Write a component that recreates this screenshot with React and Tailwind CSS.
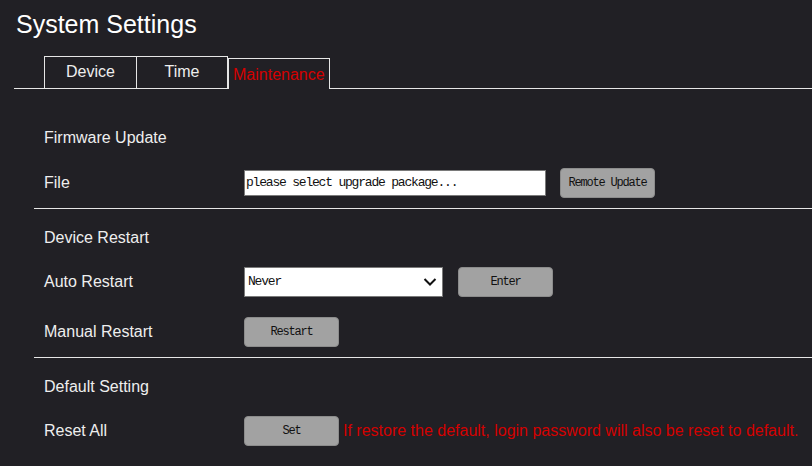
const mono = { fontFamily: '"Liberation Mono", "DejaVu Sans Mono", monospace' };

const Btn = ({ children, className = "" }) => (
  <button
    className={`h-[30px] w-[95px] rounded-[4px] border border-[#8c8c8c] bg-[#a2a2a2] text-[12px] tracking-[-1.2px] text-[#111] font-['Liberation_Mono',monospace] ${className}`}
  >
    {children}
  </button>
);

const Row = ({ label, className = "", children }) => (
  <div className={`flex h-[30px] items-center ${className}`}>
    <div className="w-[210px] pl-[10px] text-[16px] text-[#eeeeee]">{label}</div>
    <div className="flex items-center">{children}</div>
  </div>
);

const Header = ({ children }) => (
  <div className="flex h-[30px] items-center pl-[10px] text-[16px] text-[#eeeeee]">{children}</div>
);

export default function App() {
  return (
    <div className="h-[466px] w-[812px] overflow-hidden bg-[#212025] font-['Liberation_Sans',Arial,sans-serif] text-white">
      <div className="pl-[16px] pt-[8px] text-[25px] leading-[32px] text-white">System Settings</div>

      <div className="ml-[14px] mt-[16px] flex items-end border-b border-[#e6e6e6] pl-[30px]">
        <div className="flex h-[32px] w-[92px] items-center justify-center border-l border-t border-[#e6e6e6] pb-[2px] text-[16px] text-[#eeeeee]">
          Device
        </div>
        <div className="flex h-[32px] w-[92px] items-center justify-center border-l border-r border-t border-[#e6e6e6] pb-[2px] text-[16px] text-[#eeeeee]">
          Time
        </div>
        <div className="-mb-px flex h-[31px] w-[102px] items-center border-x border-t border-[#e6e6e6] bg-[#212025] pl-[4px] pt-[1px] text-[16px] text-[#d40000]">
          Maintenance
        </div>
      </div>

      <div className="ml-[34px]">
        <div className="border-b border-[#e6e6e6] pb-[10px] pt-[34px]">
          <Header>Firmware Update</Header>
          <Row label="File" className="mt-[15px]">
            <div
              className="flex h-[26px] w-[302px] items-center border border-[#7a7a7a] bg-white pl-[1px] text-[13px] tracking-[-1.2px] text-[#111]"
              style={mono}
            >
              please select upgrade package...
            </div>
            <Btn className="ml-[14px]">Remote Update</Btn>
          </Row>
        </div>

        <div className="border-b border-[#e6e6e6] pb-[10px] pt-[14px]">
          <Header>Device Restart</Header>
          <Row label="Auto Restart" className="mt-[14px]">
            <div className="flex h-[30px] w-[199px] items-center justify-between border border-[#7a7a7a] bg-white pl-[3px] pr-[5px]">
              <span className="text-[13px] tracking-[-1.2px] text-[#111]" style={mono}>
                Never
              </span>
              <svg width="14" height="10" viewBox="0 0 14 10">
                <polyline points="1.5,2 7,7.5 12.5,2" fill="none" stroke="#111" strokeWidth="2" />
              </svg>
            </div>
            <Btn className="ml-[15px]">Enter</Btn>
          </Row>
          <Row label="Manual Restart" className="mt-[20px]">
            <Btn>Restart</Btn>
          </Row>
        </div>

        <div className="pt-[14px]">
          <Header>Default Setting</Header>
          <Row label="Reset All" className="mt-[14px]">
            <Btn>Set</Btn>
            <span className="ml-[4px] whitespace-nowrap text-[16px] text-[#d40000]">
              If restore the default, login password will also be reset to default.
            </span>
          </Row>
        </div>
      </div>
    </div>
  );
}
